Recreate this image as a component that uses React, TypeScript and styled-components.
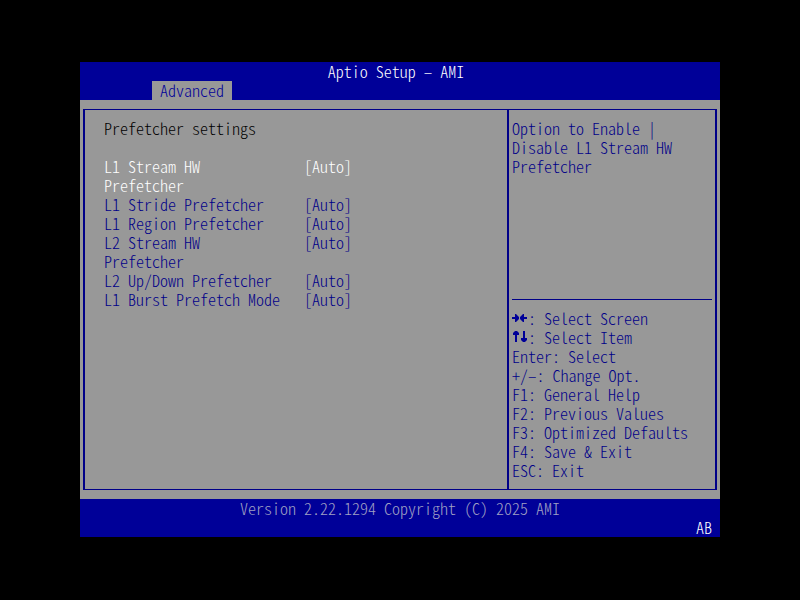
import React, { useState } from 'react';
import styled, { createGlobalStyle } from 'styled-components';

const GlobalStyle = createGlobalStyle`
  :root {
    --color-blue: #000098;
    --color-ink: #000088;
    --color-grey: #989898;
    --color-version: #a0a0c4;
    --line: 19px;
  }

  * {
    box-sizing: border-box;
  }

  body {
    margin: 0;
    background-color: #000;
  }

  body,
  button,
  select {
    font-family: 'Noto Sans CJK JP', 'Liberation Mono', monospace;
    font-feature-settings: 'hwid';
    font-size: 16px;
    font-weight: 300;
    line-height: var(--line);
  }
`;

const Screen = styled.div`
  min-height: 100vh;
  padding: 62px 10%;
`;

const Header = styled.header`
  background-color: var(--color-blue);
  color: #fff;
`;

const Title = styled.h1`
  margin: 0;
  padding-right: 8px;
  font: inherit;
  text-align: center;
`;

const Tabs = styled.nav`
  display: flex;
  padding-left: 72px;
`;

const Tab = styled.button`
  height: var(--line);
  padding: 0 8px;
  border: 0;
  background-color: var(--color-grey);
  color: var(--color-blue);
`;

const Body = styled.div`
  padding: 9px 3px;
  background-color: var(--color-grey);
`;

const Frame = styled.div`
  display: grid;
  grid-template-columns: minmax(0, 1fr) 208px;
  border: solid var(--color-ink);
  border-width: 1px 2px;
  color: var(--color-ink);
`;

const Settings = styled.main`
  padding: 9px 19px;
`;

const Heading = styled.h2`
  margin: 0 0 var(--line);
  color: #000;
  font: inherit;
`;

const Row = styled.div<{ $selected: boolean }>`
  display: grid;
  grid-template-columns: 180px auto;
  column-gap: 20px;
  justify-content: start;
  align-items: start;
  color: ${({ $selected }) => ($selected ? '#fff' : 'inherit')};
`;

const Value = styled.select`
  appearance: none;
  height: var(--line);
  padding: 0;
  border: 0;
  outline: 0;
  background: none;
  color: inherit;
`;

const Side = styled.aside`
  padding: 9px 3px;
  border-left: 2px solid var(--color-ink);
`;

const Help = styled.p`
  min-height: 180px;
  margin: 0;
`;

const Keys = styled.ul`
  margin: 0;
  padding: 9px 0 0;
  border-top: 1px solid var(--color-ink);
  list-style: none;
`;

const Key = styled.li`
  display: flex;
  white-space: pre;
`;

const Arrows = styled.svg`
  display: block;
  width: 16px;
  height: var(--line);
  fill: var(--color-blue);
`;

const Footer = styled.footer`
  background-color: var(--color-blue);
`;

const Version = styled.p`
  margin: 0;
  color: var(--color-version);
  text-align: center;
`;

const Build = styled.p`
  margin: 0;
  padding-right: 8px;
  color: #fff;
  text-align: right;
`;

const settings = [
  { id: 'l1-stream', label: 'L1 Stream HW Prefetcher' },
  { id: 'l1-stride', label: 'L1 Stride Prefetcher' },
  { id: 'l1-region', label: 'L1 Region Prefetcher' },
  { id: 'l2-stream', label: 'L2 Stream HW Prefetcher' },
  { id: 'l2-up-down', label: 'L2 Up/Down Prefetcher' },
  { id: 'l1-burst', label: 'L1 Burst Prefetch Mode' },
];

const keys = [
  'Enter: Select',
  '+/–: Change Opt.',
  'F1: General Help',
  'F2: Previous Values',
  'F3: Optimized Defaults',
  'F4: Save & Exit',
  'ESC: Exit',
];

const App: React.FC = () => {
  const [selected, setSelected] = useState('l1-stream');

  return (
    <>
      <GlobalStyle />
      <Screen>
        <Header>
          <Title>Aptio Setup – AMI</Title>
          <Tabs>
            <Tab type="button">Advanced</Tab>
          </Tabs>
        </Header>
        <Body>
          <Frame>
            <Settings>
              <Heading>Prefetcher settings</Heading>
              {settings.map(({ id, label }) => (
                <Row key={id} $selected={id === selected}>
                  <label htmlFor={id}>{label}</label>
                  <Value id={id} onFocus={() => setSelected(id)}>
                    <option>[Auto]</option>
                  </Value>
                </Row>
              ))}
            </Settings>
            <Side>
              <Help>Option to Enable | Disable L1 Stream HW Prefetcher</Help>
              <Keys>
                <Key>
                  <Arrows viewBox="0 0 16 19" aria-hidden="true">
                    <path d="M0 8h3V5h1l3 3v2l-3 3H3v-3H0zM15 8h-3V5h-1L8 8v2l3 3h1v-3h3z" />
                  </Arrows>
                  : Select Screen
                </Key>
                <Key>
                  <Arrows viewBox="0 0 16 19" aria-hidden="true">
                    <path d="M3 3h2l2 2v2H5v7H3V7H1V5zM13 14h-2l-2-2v-2h2V3h2v7h2v2z" />
                  </Arrows>
                  : Select Item
                </Key>
                {keys.map((key) => (
                  <Key key={key}>{key}</Key>
                ))}
              </Keys>
            </Side>
          </Frame>
        </Body>
        <Footer>
          <Version>Version 2.22.1294 Copyright (C) 2025 AMI</Version>
          <Build>AB</Build>
        </Footer>
      </Screen>
    </>
  );
};

export default App;
